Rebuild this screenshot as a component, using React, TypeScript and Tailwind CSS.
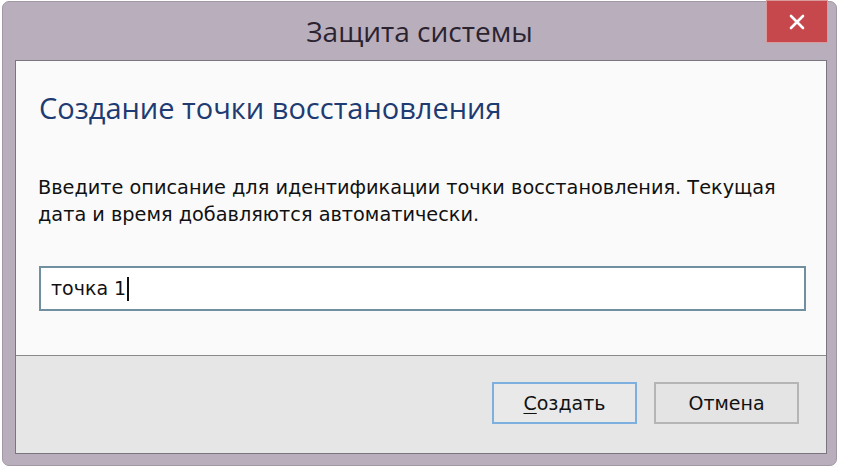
import React from "react";

export default function App() {
  return (
    <div className="w-[842px] h-[468px] bg-white overflow-hidden">
      <div className="relative ml-[2px] mt-[1px] w-[835px] h-[465px] rounded-[7px] bg-[#b9aebb] border border-[#a297a5] flex flex-col">
        {/* Title bar */}
        <div className="h-[58px] flex items-center justify-center">
          <span
            className="text-[28px] text-[#2b2330] leading-none mt-[0px]"
            style={{ fontFamily: '"Open Sans", "Noto Sans", sans-serif' }}
          >
            Защита системы
          </span>
        </div>
        <div className="absolute top-[-2px] right-[8px] w-[62px] h-[43px] bg-[#c7484c] border border-[#d99a9c] flex items-center justify-center">
          <svg width="18" height="18" viewBox="0 0 18 18">
            <path d="M3 3 L15 15 M15 3 L3 15" stroke="#ffffff" strokeWidth="2.6" strokeLinecap="round" />
          </svg>
        </div>
        {/* Client area */}
        <div className="ml-[12px] mr-[9px] h-[394px] border border-[#7b7580] flex flex-col">
          <div className="flex-1 bg-[#fafafa] flex flex-col pl-[23px] pr-[20px]">
            <div
              className="mt-[27px] text-[29px] leading-[40px] text-[#1e3b72]"
              style={{ fontFamily: '"Open Sans", "Noto Sans", sans-serif' }}
            >
              Создание точки восстановления
            </div>
            <div
              className="mt-[46px] text-[19.3px] leading-[27px] text-[#111111] ml-[-1px]"
              style={{ fontFamily: '"DejaVu Sans", Verdana, sans-serif' }}
            >
              Введите описание для идентификации точки восстановления. Текущая
              <br />
              дата и время добавляются автоматически.
            </div>
            <div
              className="mt-[38px] h-[45px] border-2 border-[#71909f] bg-white flex items-center pl-[10px] text-[19px] text-[#111111]"
              style={{ fontFamily: '"DejaVu Sans", Verdana, sans-serif' }}
            >
              <span>точка 1</span>
              <span className="inline-block w-[2px] h-[24px] bg-[#111111] ml-[1px]" />
            </div>
          </div>
          <div className="h-[98px] bg-[#e6e6e6] border-t border-[#8a8a8a] flex justify-end items-start pt-[26px] pr-[27px] gap-[17px]">
            <button
              className="w-[145px] h-[42px] border-2 border-[#7db0de] bg-[#e9e9e9] text-[19px] text-[#111111] flex items-center justify-center"
              style={{ fontFamily: '"DejaVu Sans", Verdana, sans-serif' }}
            >
              <span className="underline underline-offset-[3px]">С</span>оздать
            </button>
            <button
              className="w-[145px] h-[42px] border-2 border-[#b5b5b5] bg-[#e4e4e4] text-[19px] text-[#111111] flex items-center justify-center"
              style={{ fontFamily: '"DejaVu Sans", Verdana, sans-serif' }}
            >
              Отмена
            </button>
          </div>
        </div>
      </div>
    </div>
  );
}
